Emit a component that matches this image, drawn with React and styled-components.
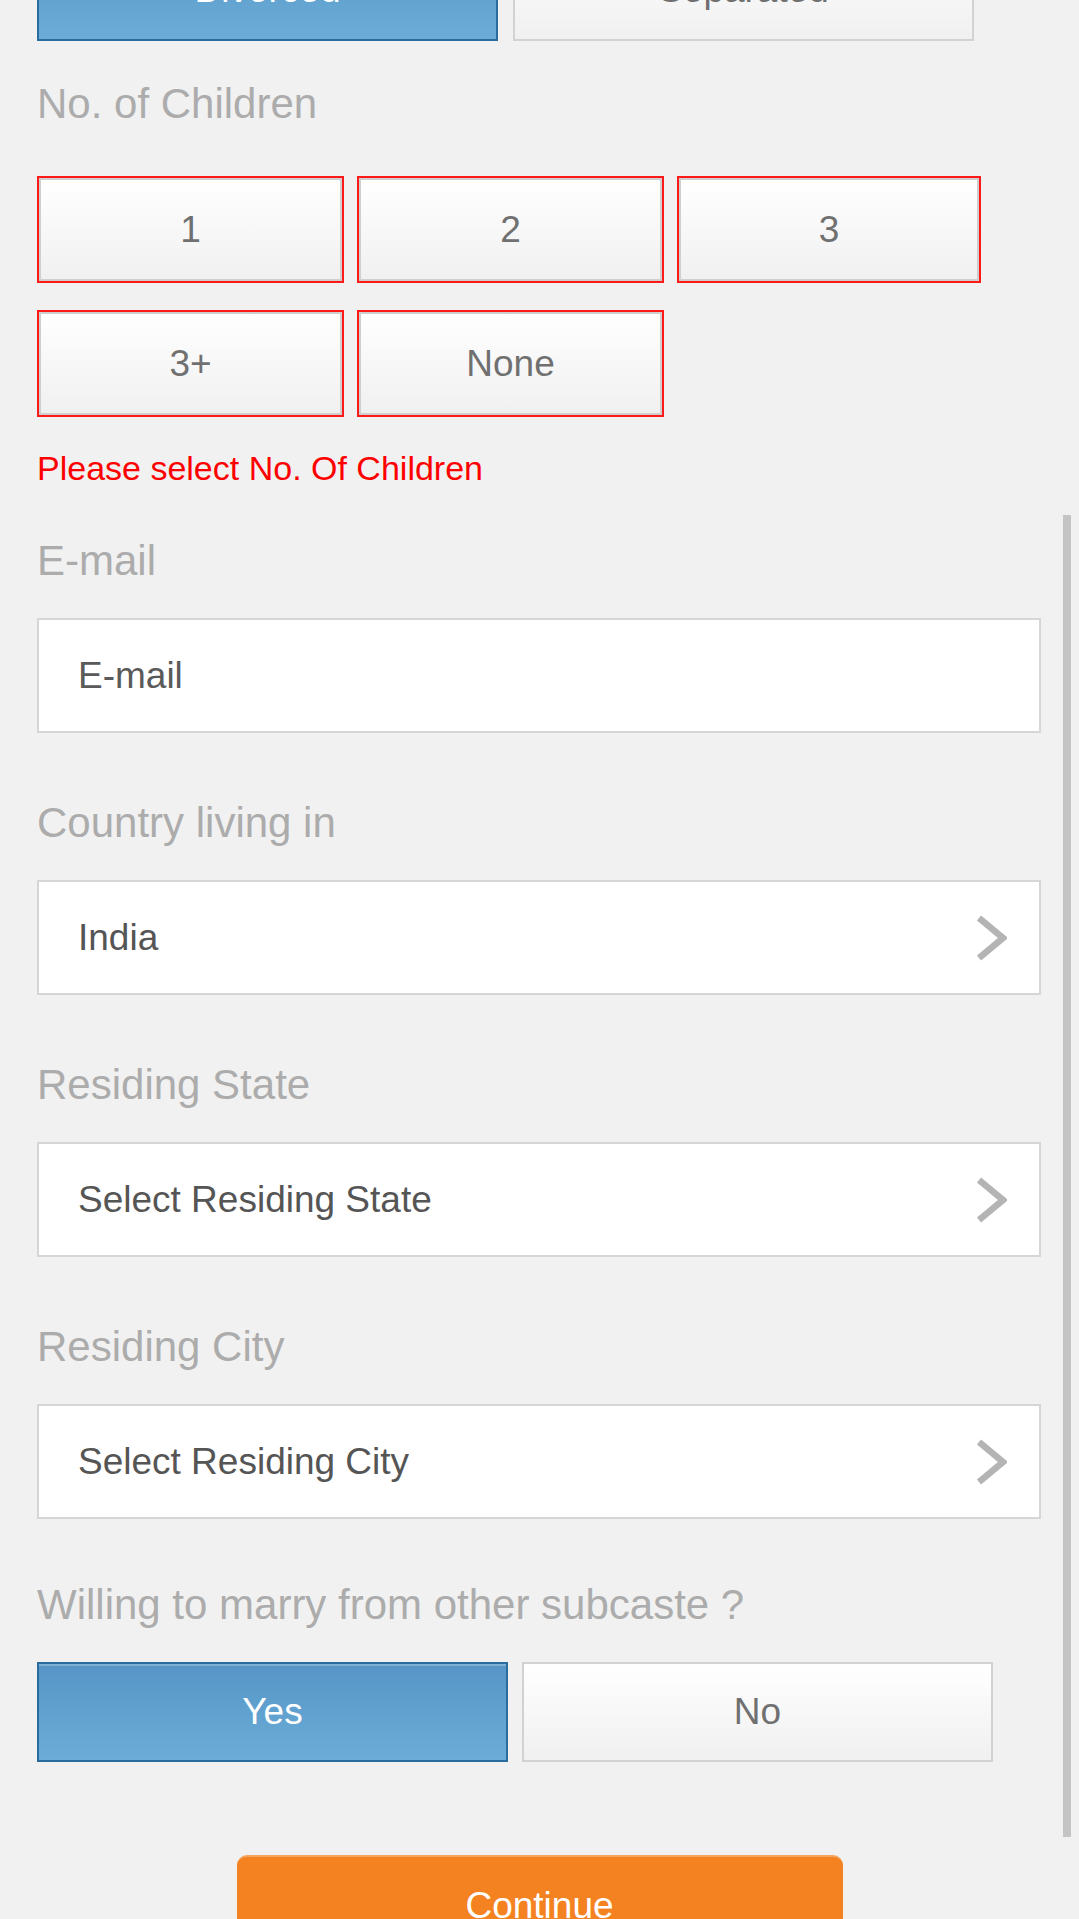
import styled, { createGlobalStyle } from "styled-components";

const GlobalStyle = createGlobalStyle`
  html, body {
    margin: 0;
    padding: 0;
    overflow: hidden;
    background: #f1f1f1;
  }
  * { box-sizing: border-box; }
`;

const Page = styled.div`
  position: relative;
  height: 1919px;
  overflow: hidden;
  background: #f1f1f1;
  font-family: "Liberation Sans", Arial, sans-serif;
`;

const Form = styled.div`
  display: flex;
  flex-direction: column;
  padding-left: 37px;
`;

const Label = styled.div`
  font-size: 42px;
  line-height: 48px;
  color: #acacac;
  margin-top: ${(p) => p.$mt || 0}px;
`;

const Field = styled.div`
  display: flex;
  flex-direction: column;
  gap: 33px;
  margin-top: ${(p) => p.$mt}px;
`;

const ChoiceRow = styled.div`
  display: flex;
  gap: ${(p) => p.$gap}px;
  margin-top: ${(p) => p.$mt || 0}px;
`;

const ChoiceGrid = styled.div`
  display: grid;
  grid-template-columns: 307px 307px 304px;
  column-gap: 13px;
  row-gap: 27px;
  margin-top: 48px;
`;

const Choice = styled.div`
  width: ${(p) => (p.$w ? p.$w + "px" : "auto")};
  height: ${(p) => p.$h}px;
  display: flex;
  align-items: center;
  justify-content: center;
  font-size: 37px;
  color: ${(p) => (p.$active ? "#fff" : "#707070")};
  background: ${(p) =>
    p.$active
      ? "linear-gradient(#5695c6, #6badd8)"
      : "linear-gradient(#ffffff, #f0f0f0)"};
  border: 2px solid
    ${(p) => (p.$error ? "#ff1a1a" : p.$active ? "#2b6c9e" : "#d2d2d2")};
  box-shadow: ${(p) =>
    p.$error
      ? "inset 0 0 0 2px #cfcfcf"
      : p.$active
      ? "inset 0 2px 0 rgba(255,255,255,0.25)"
      : "none"};
`;

const ErrorText = styled.div`
  margin-top: 31px;
  font-size: 34px;
  line-height: 40px;
  color: #ff0000;
`;

const TextInput = styled.input`
  width: 1004px;
  height: 115px;
  margin: 0;
  padding: 0 0 0 39px;
  border: 2px solid #d6d6d6;
  background: #fff;
  font-family: "Liberation Sans", Arial, sans-serif;
  font-size: 37px;
  color: #555;
  outline: none;
  &::placeholder {
    color: #5a5a5a;
  }
`;

const Select = styled.div`
  width: 1004px;
  height: 115px;
  display: flex;
  align-items: center;
  justify-content: space-between;
  padding: 0 32px 0 39px;
  border: 2px solid #d6d6d6;
  background: #fff;
  font-size: 37px;
  color: #555;
`;

const Footer = styled.div`
  display: flex;
  justify-content: center;
  margin-top: 93px;
`;

const ContinueButton = styled.div`
  width: 606px;
  height: 110px;
  padding-top: 28px;
  text-align: center;
  font-size: 37px;
  line-height: 42px;
  color: #fff;
  background: #f48221;
  border-top: 2px solid #f7a45c;
  border-radius: 10px 10px 0 0;
`;

const Scrollbar = styled.div`
  position: absolute;
  top: 515px;
  right: 8px;
  width: 8px;
  height: 1322px;
  background: #c4c4c4;
`;

function Chevron() {
  return (
    <svg width="32" height="48" viewBox="0 0 32 48">
      <polyline
        points="4,4 28,24 4,44"
        fill="none"
        stroke="#b4b4b4"
        strokeWidth="6.5"
      />
    </svg>
  );
}

const children = ["1", "2", "3", "3+", "None"];

export default function App() {
  return (
    <Page>
      <GlobalStyle />
      <Form>
        <ChoiceRow $gap={15} $mt={-61}>
          <Choice $w={461} $h={102} $active>
            Divorced
          </Choice>
          <Choice $w={461} $h={102}>
            Separated
          </Choice>
        </ChoiceRow>

        <Label $mt={39}>No. of Children</Label>
        <ChoiceGrid>
          {children.map((c) => (
            <Choice key={c} $h={107} $error>
              {c}
            </Choice>
          ))}
        </ChoiceGrid>
        <ErrorText>Please select No. Of Children</ErrorText>

        <Field $mt={49}>
          <Label>E-mail</Label>
          <TextInput placeholder="E-mail" />
        </Field>

        <Field $mt={66}>
          <Label>Country living in</Label>
          <Select>
            India
            <Chevron />
          </Select>
        </Field>

        <Field $mt={66}>
          <Label>Residing State</Label>
          <Select>
            Select Residing State
            <Chevron />
          </Select>
        </Field>

        <Field $mt={66}>
          <Label>Residing City</Label>
          <Select>
            Select Residing City
            <Chevron />
          </Select>
        </Field>

        <Field $mt={62}>
          <Label>Willing to marry from other subcaste ?</Label>
          <ChoiceRow $gap={14}>
            <Choice $w={471} $h={100} $active>
              Yes
            </Choice>
            <Choice $w={471} $h={100}>
              No
            </Choice>
          </ChoiceRow>
        </Field>
      </Form>
      <Footer>
        <ContinueButton>Continue</ContinueButton>
      </Footer>
      <Scrollbar />
    </Page>
  );
}
